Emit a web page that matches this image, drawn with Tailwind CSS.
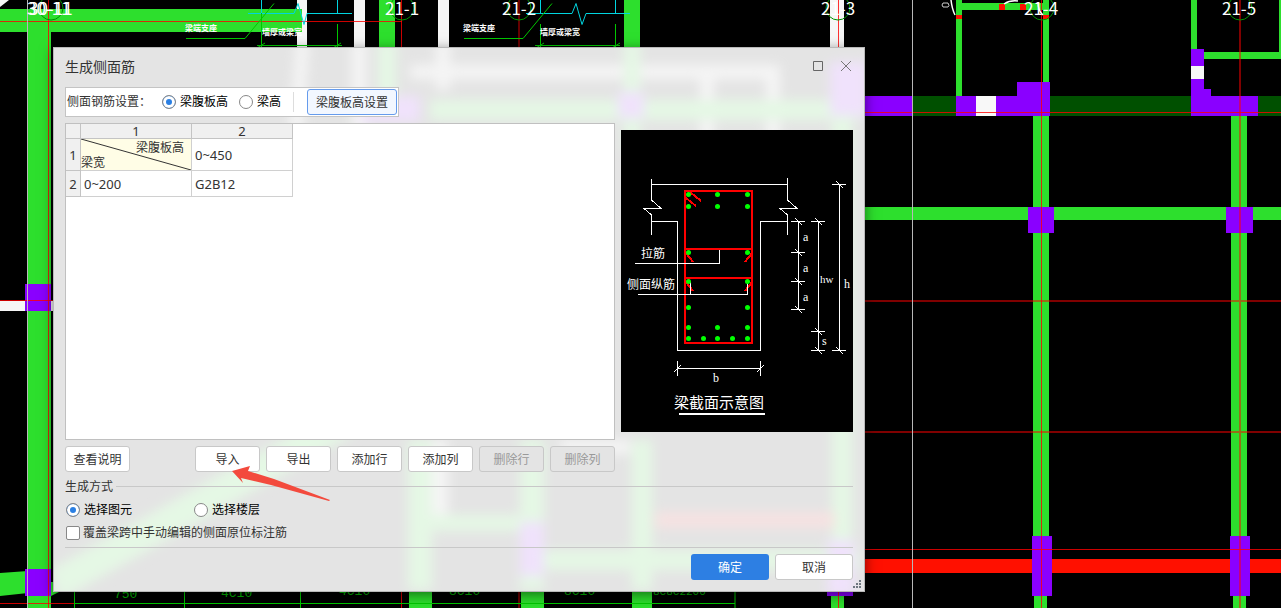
<!DOCTYPE html>
<html lang="zh-CN">
<head>
  <meta charset="UTF-8">
  <meta name="viewport" content="width=device-width, initial-scale=1.0">
  <title>生成侧面筋</title>
  <script src="https://cdn.jsdelivr.net/npm/@tailwindcss/browser@4"></script>
</head>
<body class="relative min-h-screen overflow-hidden bg-black font-['Noto_Sans','Noto_Sans_CJK_SC',sans-serif] text-xs text-[#333]">
  <!-- CAD drawing -->
  <svg class="absolute top-0 left-0" width="1281" height="608" viewBox="0 0 1281 608" aria-hidden="true">
    <g fill="#f6f6f6">
      <path d="M0 0h9L0 7z"/>
      <rect x="297" y="0" width="10" height="60"/>
      <rect x="354" y="0" width="11" height="60"/>
      <rect x="438" y="0" width="11" height="60"/>
      <rect x="830" y="0" width="14" height="60"/>
      <rect x="0" y="301" width="54" height="10"/>
    </g>
    <!-- beams -->
    <rect x="912" y="96" width="369" height="20" fill="#005000"/>
    <g fill="#2ddf2d">
      <path d="M0 9h302v23H51v576H28V32H0z"/>
      <rect x="379" y="0" width="16" height="60"/>
      <rect x="624" y="0" width="16" height="60"/>
      <path d="M0 573l28-2v22l-28 3zM51 582h14v7l-14 7z"/>
      <rect x="409" y="580" width="23" height="28"/>
      <rect x="521" y="580" width="23" height="28"/>
      <rect x="632" y="580" width="20" height="28"/>
      <rect x="831" y="590" width="13" height="18"/>
      <rect x="956" y="0" width="6" height="96"/>
      <rect x="962" y="3" width="82" height="7"/>
      <rect x="1043" y="0" width="6" height="82"/>
      <rect x="1033" y="116" width="16" height="420"/>
      <rect x="1034" y="596" width="13" height="12"/>
      <rect x="1191" y="0" width="6" height="57"/>
      <rect x="1204" y="52" width="77" height="7"/>
      <rect x="1279" y="0" width="2" height="52"/>
      <rect x="1231" y="116" width="16" height="420"/>
      <rect x="1233" y="596" width="13" height="12"/>
      <rect x="860" y="207" width="421" height="13"/>
    </g>
    <g fill="#ff1000">
      <rect x="860" y="559" width="421" height="14"/>
      <rect x="999" y="4" width="6" height="6"/>
      <rect x="1020" y="4" width="6" height="6"/>
      <rect x="956" y="15" width="6" height="4"/>
      <rect x="1043" y="15" width="6" height="4"/>
    </g>
    <!-- columns -->
    <g fill="#8a00ff">
      <rect x="25" y="284" width="26" height="27"/>
      <rect x="25" y="569" width="26" height="27"/>
      <rect x="827" y="580" width="26" height="16"/>
      <rect x="860" y="96" width="52" height="20"/>
      <path d="M956 96h61V82h33v34h-94z"/>
      <rect x="1028" y="207" width="26" height="26"/>
      <rect x="1032" y="536" width="20" height="60"/>
      <path d="M1191 49h13v40h7v7h47v20h-67z"/>
      <rect x="1226" y="207" width="27" height="26"/>
      <rect x="1230" y="536" width="20" height="60"/>
    </g>
    <rect x="976" y="96" width="20" height="20" fill="#f8f8f8"/>
    <rect x="1191" y="66" width="13" height="13" fill="#f8f8f8"/>
    <!-- axes -->
    <g stroke="#f00" stroke-opacity=".8" fill="none">
      <path d="M0 21.500h402M401.500 0v60M401.500 580v28M519 0v60M519 580v28M838.500 0v60M838.500 590v18M0 300.500h54M0 603.500h75M860 112.500h421M860 549.500h421"/>
      <path d="M48.500 0v608M1041.500 0v608"/>
      <path d="M860 301h421M860 432h421M1240 0v608" stroke-width="2" stroke-opacity=".5"/>
    </g>
    <path d="M27.500 0v608M912.500 0v608" stroke="#b8b8b8"/>
    <g stroke="#009400" fill="none">
      <circle cx="51" cy="8" r="12"/>
      <circle cx="402" cy="8" r="12"/>
      <circle cx="519" cy="8" r="12"/>
      <circle cx="838" cy="8" r="12"/>
      <circle cx="1042" cy="8" r="12"/>
      <circle cx="1240" cy="8" r="12"/>
    </g>
    <!-- support details -->
    <g fill="none" stroke="#00d5e0">
      <path d="M261.500 0v13M337.500 0v13M248 13.500h46l4-10 6 21 3-11h45"/>
      <path d="M540.500 0v13M615.500 0v13M526 13.500h46l4-10 6 21 4-11h44"/>
    </g>
    <g fill="none" stroke="#00c800">
      <path d="M186 38.500h59l29-35M261.500 13v34M337.500 24v23M257 45.500h85M257 48l8-5M333 48l8-5"/>
      <path d="M464 38.500h59l29-35M540.500 24v23M615.500 24v23M535 45.500h85M536 48l8-5M612 48l8-5"/>
      <path d="M75 603.500h660M74.500 590v18M184.500 590v18M300.500 590v18M735 590v18"/>
    </g>
    <g fill="none" stroke="#fff" stroke-width="1.500">
      <path d="M951 0q1 9 4 15M1004 4q6-4 14-3M1038 2q0 9 5 13"/>
      <path d="M943 3h5q2 3 0 4h-5q-2-2 0-4z" stroke-width=".8"/>
    </g>
    <g fill="#fff" font-size="17" font-family="'Noto Sans CJK SC', sans-serif">
      <text x="27" y="15">30-11</text>
      <text x="29" y="15">30-11</text>
      <text x="385" y="15">21-1</text>
      <text x="502" y="15">21-2</text>
      <text x="821" y="15">21-3</text>
      <text x="1024" y="15">21-4</text>
      <text x="1222" y="15">21-5</text>
    </g>
    <g fill="#fff" font-size="8" font-weight="700" font-family="'Noto Sans CJK SC', sans-serif">
      <text x="185" y="31">梁端支座</text>
      <text x="262" y="35">墙厚或梁宽</text>
      <text x="463" y="31">梁端支座</text>
      <text x="540" y="35">墙厚或梁宽</text>
    </g>
    <g fill="#00b400" font-size="13" font-family="'Liberation Mono', monospace">
      <text x="114" y="598">750</text>
      <text x="221" y="597">4C10</text>
      <text x="339" y="595">4C10</text>
      <text x="449" y="595">8C10</text>
      <text x="564" y="595">8C10</text>
      <text x="653" y="595" font-size="11">8C8C2200</text>
    </g>
  </svg>

  <!-- Dialog -->
  <main role="dialog" aria-labelledby="title" class="absolute top-[47px] left-[53px] flex w-[812px] flex-col overflow-hidden border border-[#b9b9b9] bg-[#e4e4e4] px-[11px] pb-[11px] shadow-[0_3px_12px_rgba(0,0,0,0.5)]">
    <!-- frosted backdrop -->
    <svg class="absolute inset-0 size-full" viewBox="54 48 810 543" preserveAspectRatio="none" aria-hidden="true">
      <defs>
        <filter id="soft" x="-20%" y="-20%" width="140%" height="140%"><feGaussianBlur stdDeviation="6"/></filter>
      </defs>
      <g filter="url(#soft)">
        <path fill="#f5f5f5" d="M297 40h12l-6 90h-14zM352 40h14v90h-14zM436 40h14v50h-14zM410 65h370v14H410zM700 70h14v70h-14zM766 70h14v70h-14zM430 440h18v80h-18zM560 440h70v14h-70z"/>
        <path fill="#e5f8e5" d="M430 100h430v20H430zM378 40h18v70h-18zM624 40h16v110h-16zM408 440h24v150h-24zM520 440h24v150h-24zM632 440h20v150h-20zM832 120h20v470h-20zM50 570L300 430h60L60 600zM430 515h100v16h-100zM540 550h320v20H540z"/>
        <path fill="#f0e2fc" d="M360 96h60v26h-60zM618 92h26v26h-26zM830 62h37v54h-37zM520 522h24v54h-24zM828 540h26v56h-26z"/>
        <path fill="#f6e2e2" d="M655 512h180v16H655z"/>
      </g>
    </svg>

    <header class="relative flex h-[39px] items-center justify-between">
      <h1 id="title" class="pb-[2px] text-sm">生成侧面筋</h1>
      <div class="flex gap-4 pr-px pb-[3px]">
        <button type="button" aria-label="最大化" class="size-3">
          <svg viewBox="0 0 12 12" fill="none" stroke="#666"><path d="M1.500 1.500h9v9h-9z"/></svg>
        </button>
        <button type="button" aria-label="关闭" class="size-3">
          <svg viewBox="0 0 12 12" fill="none" stroke="#777"><path d="M1 1l10 10M11 1L1 11"/></svg>
        </button>
      </div>
    </header>

    <div class="relative flex h-[30px] items-center self-start border border-[#c4c4c4] bg-white pr-px pl-px text-black">
      <span class="w-[95px] text-[#333]">侧面钢筋设置：</span>
      <label class="flex items-center gap-1">
        <input type="radio" name="by" checked class="size-3.5 appearance-none rounded-full border border-[#888] bg-white checked:bg-[#2a7fe3] checked:shadow-[inset_0_0_0_3px_#fff]">梁腹板高
      </label>
      <label class="ml-[11px] flex items-center gap-1">
        <input type="radio" name="by" class="size-3.5 appearance-none rounded-full border border-[#888] bg-white checked:bg-[#2a7fe3] checked:shadow-[inset_0_0_0_3px_#fff]">梁高
      </label>
      <span class="mr-[13px] ml-3 h-5 w-px bg-[#ddd]"></span>
      <button type="button" class="h-[26px] w-[90px] rounded-[3px] border border-[#659bec] bg-[#f2f7ff] pt-px text-[#333]">梁腹板高设置</button>
    </div>

    <div class="relative mt-[6px] flex gap-[6px]">
      <section class="h-[317px] flex-1 border border-[#c0c0c0] bg-white">
        <table class="w-[227px] table-fixed border-separate border-spacing-0 text-[13px] leading-[14px]">
          <colgroup><col class="w-[15px]"><col class="w-[111px]"><col class="w-[101px]"></colgroup>
          <thead>
            <tr class="h-[15px] bg-[#f0f0f0]">
              <th class="border-r border-b border-[#c4c4c4] p-0"></th>
              <th class="border-r border-b border-[#c4c4c4] p-0 font-normal">1</th>
              <th class="border-r border-b border-[#c4c4c4] p-0 font-normal">2</th>
            </tr>
          </thead>
          <tbody>
            <tr class="h-8">
              <th class="border-r border-b border-[#c4c4c4] bg-[#f0f0f0] p-0 font-normal">1</th>
              <td class="relative border-r border-b border-[#d0d0d0] bg-[#fffde6] p-0 text-xs">
                <svg class="absolute inset-0 size-full" viewBox="0 0 110 31" preserveAspectRatio="none" aria-hidden="true"><path d="M0 0l110 31" stroke="#333"/></svg>
                <div class="pr-[7px] text-right leading-[17px]">梁腹板高</div>
                <div class="leading-[14px]">梁宽</div>
              </td>
              <td class="border-r border-b border-[#d0d0d0] px-[3px] py-0">0~450</td>
            </tr>
            <tr class="h-[26px]">
              <th class="border-r border-b border-[#c4c4c4] bg-[#f0f0f0] p-0 font-normal">2</th>
              <td class="border-r border-b border-[#d0d0d0] px-[3px] py-0">0~200</td>
              <td class="border-r border-b border-[#d0d0d0] px-[3px] py-0">G2B12</td>
            </tr>
          </tbody>
        </table>
      </section>

      <!-- beam section -->
      <svg class="mt-[7px] h-[302px] w-[232px] shrink-0 bg-black" viewBox="621 130 232 302" role="img" aria-label="梁截面示意图">
        <g fill="none" stroke="#fff" shape-rendering="crispEdges">
          <path d="M651.500 179v21l9 8h-17l8 7v20M651.500 184.500h136M787.500 178v22l9 8h-17l8 7v20M651.500 221.500h26v129h83v-129h27"/>
          <path d="M798.500 221v89M791 221.500h14M791 252.500h14M791 281.500h14M791 309.500h14M795 218l7 7M795 249l7 7M795 278l7 7M795 306l7 7"/>
          <path d="M818.500 221v130M811 221.500h14M811 331.500h14M811 350.500h14M815 218l7 7M815 328l7 7M815 347l7 7"/>
          <path d="M839.500 184v167M832 184.500h14M832 350.500h14M836 181l7 7M836 347l7 7"/>
          <path d="M677.500 361v15M760.500 361v15M677 368.500h84M674 372l7-7M757 372l7-7"/>
        </g>
        <g fill="none" stroke="#f00" stroke-width="2" shape-rendering="crispEdges">
          <rect x="685" y="191" width="67" height="152"/>
          <path d="M685 249h67M685 278h67M690 192l11 9M686 198l10 8M686 253l7 9M752 253l-7 9M686 282l7 9M752 282l-7 9"/>
        </g>
        <path fill="none" stroke="#fff" shape-rendering="crispEdges" d="M635 263.500h84.500v-14M638 294.500h109.500v-13M690.500 294v-13"/>
        <path fill="none" stroke="#fff" stroke-width="2" d="M679 414h86"/>
        <g fill="none" stroke="#0f0" stroke-width="5" stroke-linecap="round">
          <path d="M688.500 194.500h.01M717.500 194.500h.01M747.500 194.500h.01M688.500 206.500h.01M717.500 206.500h.01M747.500 206.500h.01M688.500 252.500h.01M747.500 252.500h.01M688.500 281.500h.01M747.500 281.500h.01M688.500 307.500h.01M747.500 307.500h.01M688.500 327.500h.01M717.500 327.500h.01M747.500 327.500h.01M688.500 338.500h.01M703.500 338.500h.01M717.500 338.500h.01M732.500 338.500h.01M747.500 338.500h.01"/>
        </g>
        <g fill="#fff" font-size="12" font-family="'Liberation Serif', 'Noto Sans CJK SC', serif">
          <text x="641" y="258">拉筋</text>
          <text x="627" y="289">侧面纵筋</text>
          <text x="674" y="408" font-size="15">梁截面示意图</text>
          <text x="803" y="241">a</text>
          <text x="803" y="272">a</text>
          <text x="803" y="301">a</text>
          <text x="820" y="283" font-size="11">hw</text>
          <text x="844" y="288">h</text>
          <text x="822" y="345">s</text>
          <text x="713" y="382">b</text>
        </g>
      </svg>
    </div>

    <div class="relative mt-[6px] flex gap-[6px]">
      <button type="button" class="mr-[59px] h-[26px] w-[65px] rounded-[3px] border border-[#c8c8c8] bg-white pt-[2px]">查看说明</button>
      <button type="button" class="h-[26px] w-[65px] rounded-[3px] border border-[#c8c8c8] bg-white pt-[2px]">导入</button>
      <button type="button" class="h-[26px] w-[65px] rounded-[3px] border border-[#c8c8c8] bg-white pt-[2px]">导出</button>
      <button type="button" class="h-[26px] w-[65px] rounded-[3px] border border-[#c8c8c8] bg-white pt-[2px]">添加行</button>
      <button type="button" class="h-[26px] w-[65px] rounded-[3px] border border-[#c8c8c8] bg-white pt-[2px]">添加列</button>
      <button type="button" disabled class="h-[26px] w-[65px] rounded-[3px] border border-[#c8c8c8] bg-[#e4e4e4] pt-[2px] text-[#999]">删除行</button>
      <button type="button" disabled class="h-[26px] w-[65px] rounded-[3px] border border-[#c8c8c8] bg-[#e4e4e4] pt-[2px] text-[#999]">删除列</button>
    </div>

    <fieldset class="relative mt-[6px] border-b border-[#c8c8c8] pb-1">
      <legend class="flex w-full items-center gap-[3px] leading-[17px] after:h-px after:flex-1 after:bg-[#c8c8c8]">生成方式</legend>
      <div class="mt-[6px] flex h-[18px] items-center pl-px text-black">
        <label class="flex w-32 items-center gap-1">
          <input type="radio" name="mode" checked class="size-3.5 appearance-none rounded-full border border-[#888] bg-white checked:bg-[#2a7fe3] checked:shadow-[inset_0_0_0_3px_#fff]">选择图元
        </label>
        <label class="flex items-center gap-1">
          <input type="radio" name="mode" class="size-3.5 appearance-none rounded-full border border-[#888] bg-white checked:bg-[#2a7fe3] checked:shadow-[inset_0_0_0_3px_#fff]">选择楼层
        </label>
      </div>
      <label class="mt-1 flex h-5 items-center gap-[3px] pl-px">
        <input type="checkbox" class="size-3.5 appearance-none rounded-xs border border-[#888] bg-white checked:bg-[#2a7fe3]">覆盖梁跨中手动编辑的侧面原位标注筋
      </label>
    </fieldset>

    <footer class="relative mt-[6px] flex justify-end gap-[6px]">
      <button type="submit" class="h-[26px] w-[78px] rounded-[3px] bg-[#2d7fe3] pt-[2px] text-white">确定</button>
      <button type="button" class="h-[26px] w-[78px] rounded-[3px] border border-[#c8c8c8] bg-white pt-[2px]">取消</button>
    </footer>
    <svg class="absolute right-[3px] bottom-[3px]" width="8" height="8" viewBox="0 0 8 8" fill="#6f7780" aria-hidden="true"><path d="M6 0h2v2H6zM3 3h2v2H3zM6 3h2v2H6zM0 6h2v2H0zM3 6h2v2H3zM6 6h2v2H6z"/></svg>
  </main>

  <!-- pointer to the import button -->
  <svg class="pointer-events-none absolute top-[466px] left-[232px]" width="99" height="36" viewBox="232 466 99 36" fill="#f34a3d" aria-hidden="true"><path d="M232 471l18-5-2 5 26 8 56 21-1 1-58-16-30-7 2 5z"/></svg>
</body>
</html>
